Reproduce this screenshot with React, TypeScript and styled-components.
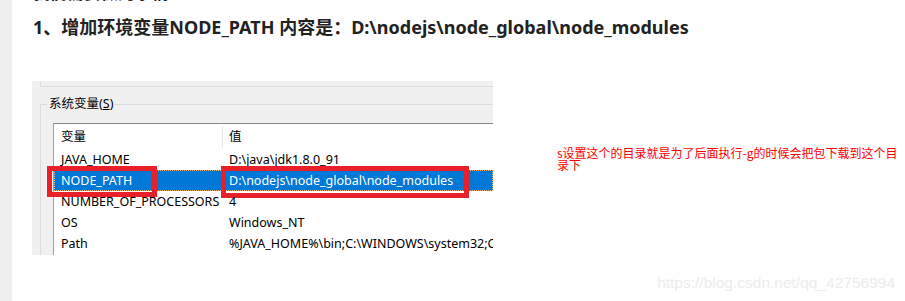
import React from 'react';
import styled, { createGlobalStyle } from 'styled-components';

const GlobalStyle = createGlobalStyle`
  html, body {
    margin: 0;
    padding: 0;
    background: #fefefe;
  }
`;

const Page = styled.div`
  display: flex;
  width: 905px;
  height: 301px;
  overflow: hidden;
  background: #fefefe;
  font-family: "Noto Sans", "Noto Sans CJK SC", sans-serif;
`;

const Gutter = styled.div`
  width: 12px;
  flex-shrink: 0;
  background: #efefef;
`;

const Article = styled.div`
  flex: 1;
  min-width: 0;
  display: flex;
  flex-direction: column;
  padding-left: 21px;
`;

const CutLine = styled.div`
  margin-top: -17px;
  height: 20px;
  line-height: 20px;
  font-size: 17px;
  font-weight: 700;
  color: #222;
  white-space: nowrap;
`;

const Heading = styled.h3`
  margin: 9px 0 0;
  line-height: 30px;
  font-size: 18px;
  font-weight: 700;
  color: #222;
  white-space: nowrap;
`;

const ShotRow = styled.div`
  display: flex;
  align-items: flex-start;
  margin-top: 39px;
`;

const Shot = styled.div`
  width: 461px;
  height: 174px;
  margin-left: -1px;
  flex-shrink: 0;
  overflow: hidden;
  background: #f0f0f0;
  font-size: 12.5px;
  color: #000;
`;

const PrevGroup = styled.div`
  height: 5px;
  margin-left: 8px;
  border-left: 1px solid #dcdcdc;
  border-bottom: 1px solid #dcdcdc;
`;

const Group = styled.fieldset`
  margin: 9px 0 0 8px;
  padding: 11px 0 0 12px;
  min-width: 0;
  border: 1px solid #dcdcdc;
  border-right: none;
  border-bottom: none;
`;

const Legend = styled.legend`
  margin-left: -6px;
  padding: 0 2px;
  line-height: 16px;
  font-size: 12.5px;
`;

const List = styled.div`
  min-height: 150px;
  background: #fff;
  border-top: 1px solid #828790;
  border-left: 1px solid #a0a0a0;
`;

const Row = styled.div<{ $head?: boolean; $selected?: boolean }>`
  position: relative;
  display: grid;
  grid-template-columns: 168px 1fr;
  height: ${p => (p.$head ? 25 : 21)}px;
  line-height: ${p => (p.$head ? 25 : 21)}px;
  background: ${p => (p.$selected ? '#0078d7' : 'transparent')};
  color: ${p => (p.$selected ? '#fff' : '#000')};
  outline: ${p => (p.$selected ? '1px dotted #f2b36b' : 'none')};
  outline-offset: -1px;
`;

const Cell = styled.div`
  padding-left: 7px;
  white-space: nowrap;
  overflow: hidden;
`;

const HeadCell = styled.div<{ $sep?: boolean }>`
  padding-left: ${p => (p.$sep ? 6 : 7)}px;
  margin: ${p => (p.$sep ? '2px 0 1px' : '0')};
  line-height: ${p => (p.$sep ? 22 : 25)}px;
  border-left: ${p => (p.$sep ? '1px solid #e5e5e5' : 'none')};
  white-space: nowrap;
`;

const Mark = styled.span<{ $left: number; $width: number; $height: number }>`
  position: absolute;
  top: -4px;
  left: ${p => p.$left}px;
  width: ${p => p.$width}px;
  height: ${p => p.$height}px;
  box-sizing: border-box;
  border: 5px solid #e8202a;
  pointer-events: none;
`;

const Note = styled.div`
  width: 345px;
  margin: 66px 0 0 64px;
  font-size: 12px;
  line-height: 12px;
  color: #ff0000;
  font-family: "Noto Sans CJK SC", sans-serif;
`;

const Watermark = styled.div`
  margin-top: auto;
  align-self: flex-end;
  padding: 0 10px 8px 0;
  line-height: 20px;
  font-size: 15.5px;
  font-family: "Liberation Sans", Arial, sans-serif;
  color: #ececec;
`;

const vars = [
  { name: 'JAVA_HOME', value: 'D:\\java\\jdk1.8.0_91' },
  { name: 'NODE_PATH', value: 'D:\\nodejs\\node_global\\node_modules', selected: true },
  { name: 'NUMBER_OF_PROCESSORS', value: '4' },
  { name: 'OS', value: 'Windows_NT' },
  { name: 'Path', value: '%JAVA_HOME%\\bin;C:\\WINDOWS\\system32;C:\\WINDOWS;C:\\WINDOWS\\System32\\Wbem' },
];

export default function App() {
  return (
    <>
      <GlobalStyle />
      <Page>
        <Gutter />
        <Article>
          <CutLine>我们需要做的事情</CutLine>
          <Heading>1、增加环境变量NODE_PATH 内容是：D:\nodejs\node_global\node_modules</Heading>
          <ShotRow>
            <Shot>
              <PrevGroup />
              <Group>
                <Legend>系统变量(<u>S</u>)</Legend>
                <List>
                  <Row $head>
                    <HeadCell>变量</HeadCell>
                    <HeadCell $sep>值</HeadCell>
                  </Row>
                  {vars.map(v => (
                    <Row key={v.name} $selected={v.selected}>
                      <Cell>{v.name}</Cell>
                      <Cell>{v.value}</Cell>
                      {v.selected && (
                        <>
                          <Mark $left={-7} $width={110} $height={31} />
                          <Mark $left={167} $width={248} $height={32} />
                        </>
                      )}
                    </Row>
                  ))}
                </List>
              </Group>
            </Shot>
            <Note>s设置这个的目录就是为了后面执行-g的时候会把包下载到这个目录下</Note>
          </ShotRow>
          <Watermark>https://blog.csdn.net/qq_42756994</Watermark>
        </Article>
      </Page>
    </>
  );
}
